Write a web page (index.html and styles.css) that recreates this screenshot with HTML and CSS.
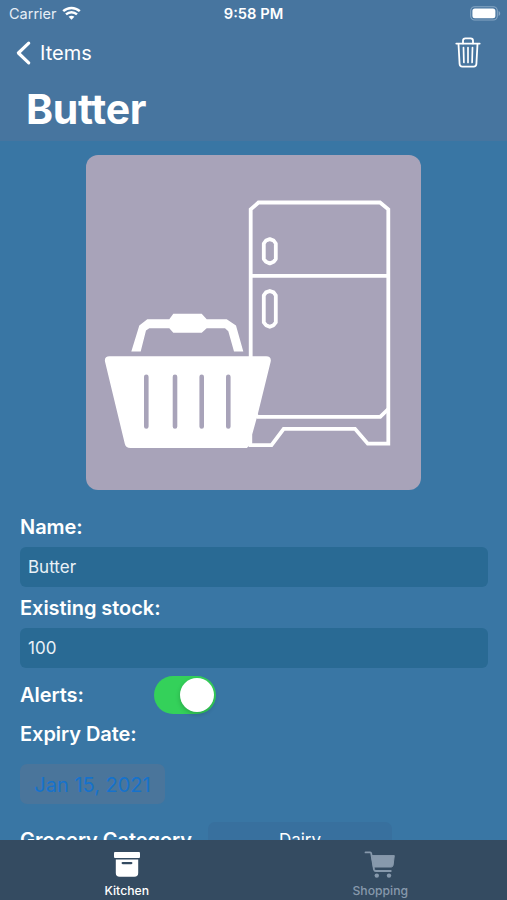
FILE: index.html
```html
<!DOCTYPE html>
<html lang="en">
<head>
    <meta charset="UTF-8">
    <meta name="viewport" content="width=device-width, initial-scale=1.0">
    <title>Butter</title>
    <link rel="stylesheet" href="styles.css">
</head>
<body>
    <div class="app">
        <header class="header">
            <div class="status-bar">
                <div class="carrier">
                    <span>Carrier</span>
                    <svg width="19" height="15" viewBox="0 0 19 15" fill="none" stroke="#fff" stroke-width="2.5">
                        <path d="M1.2 5.2C6 .8 13 .8 17.8 5.2"/>
                        <path d="M4 8.4c3.2-2.9 7.8-2.9 11 0"/>
                        <path d="M6.6 10.8c1.7-1.5 4.1-1.5 5.8 0L9.5 13.8z" fill="#fff" stroke="none"/>
                    </svg>
                </div>
                <div class="clock">9:58 PM</div>
                <div class="battery">
                    <svg width="31" height="15" viewBox="0 0 31 15">
                        <rect x=".7" y=".7" width="26.6" height="13.3" rx="4" fill="none" stroke="#86a6c4" stroke-width="1.1"/>
                        <rect x="2.4" y="2.5" width="23" height="9.8" rx="2.5" fill="#fff"/>
                        <path d="M28.6 5v5c2.1-.9 2.1-4.1 0-5z" fill="#86a6c4"/>
                    </svg>
                </div>
            </div>
            <div class="nav-bar">
                <a href="#" class="back">
                    <svg width="15" height="24" viewBox="0 0 15 24" fill="none" stroke="#fff" stroke-width="3.2" stroke-linecap="round" stroke-linejoin="round">
                        <path d="M12.7 2.2 2.4 12l10.3 9.8"/>
                    </svg>
                    <span>Items</span>
                </a>
                <a href="#" class="delete" aria-label="Delete">
                    <svg width="26" height="31" viewBox="0 0 26 31" fill="none" stroke="#fff" stroke-width="1.8" stroke-linecap="round" stroke-linejoin="round">
                        <path d="M1.3 6.6h23.4"/>
                        <path d="M8 6.4V3.800C8 2.200 8.800 1.400 10.400 1.400h5.200C17.200 1.400 18 2.200 18 3.800v2.600"/>
                        <path d="M3.500 7l1.100 20c.1 1.700 1 2.600 2.700 2.600h11.400c1.700 0 2.600-.9 2.700-2.600l1.100-20"/>
                        <path d="M8.500 10.500l.4 15M13 10.500v15M17.500 10.500l-.4 15" stroke-width="1.700"/>
                    </svg>
                </a>
            </div>
            <h1>Butter</h1>
        </header>

        <main class="content">
            <div class="photo">
                <svg width="335" height="335" viewBox="86 154.500 335 335" fill="none" stroke="#fff" stroke-width="3.800">
                    <!-- fridge -->
                    <path d="M250.700 430V208.800L258.500 202H380l8.300 6.800v234.400h-20.500L355 428.300h-71.300L271.500 444.600H249"/>
                    <path d="M250.700 275.400h137.600M250.700 409.500l7 6.800h122.500l8.100-7.800"/>
                    <path stroke-linejoin="round" d="M269.800 238.600l3.800 1.400 2.200 3v15.500l-2.200 2.800-3.800 1.600-3.800-1.600-2.200-2.800V243l2.200-3z"/>
                    <path stroke-linejoin="round" d="M269.800 290.500l3.800 1.400 2.200 3v27l-2.200 2.800-3.800 1.600-3.800-1.600-2.200-2.800v-27l2.200-3z"/>
                    <!-- basket -->
                    <g fill="#fff" stroke="none">
                        <path d="M131.300 351l8-26 8-6.300h22l4-5.400h28.400l5 5.400h20l9.300 6.300 7.300 26H234l-5.700-20.300-3.300-3h-18.300l-5 4.600h-28.400l-4-4.600h-20l-3.300 2.300-5.300 21z"/>
                        <path d="M109.500 355.800h156.700c3.600 0 5.300 2.200 4.400 5.700L257.700 414l-5.500 20v9l-5.500 4.600H130.500c-3.200 0-4.900-1.300-5.700-4.300L105.100 361.500c-.9-3.500.8-5.700 4.400-5.700z"/>
                    </g>
                    <path d="M146.300 376.300V426M175 376.300V426M201.700 376.300V426M228.300 376.300V426" stroke="#a8a3b9" stroke-width="4.600" stroke-linecap="round"/>
                </svg>
            </div>

            <form class="item-form">
                <label class="label" for="name">Name:</label>
                <input class="field" id="name" type="text" value="Butter">
                <label class="label" for="stock">Existing stock:</label>
                <input class="field" id="stock" type="text" value="100">
                <div class="alerts-row">
                    <span class="label alerts-label">Alerts:</span>
                    <span class="switch"><span class="knob"></span></span>
                </div>
                <span class="label expiry-label">Expiry Date:</span>
                <button type="button" class="date">Jan 15, 2021</button>
                <div class="category-row">
                    <span class="label category-label">Grocery Category</span>
                    <span class="category">Dairy</span>
                </div>
            </form>
        </main>

        <nav class="tab-bar">
            <a href="#" class="tab active">
                <svg width="28" height="26" viewBox="0 0 28 26" fill="currentColor">
                    <path d="M2.300.5h23.400c.8 0 1.300.5 1.300 1.300v3.400c0 .8-.5 1.300-1.300 1.300H2.300C1.500 6.500 1 6 1 5.200V1.800C1 1 1.500.5 2.300.5z"/>
                    <path fill-rule="evenodd" d="M2.800 7.900h22.400v13.600c0 2.500-1.300 3.800-3.800 3.800H6.600c-2.500 0-3.800-1.300-3.800-3.800zM9.700 10.400a1.100 1.100 0 0 0 0 2.300h8.600a1.100 1.100 0 0 0 0-2.300z"/>
                </svg>
                <span>Kitchen</span>
            </a>
            <a href="#" class="tab">
                <svg width="32" height="27" viewBox="0 0 32 27" fill="none" stroke="currentColor" stroke-width="1.800" stroke-linecap="round" stroke-linejoin="round">
                    <path d="M1.500 1.400h4.700c.6 0 .9.300 1 .9L10 18.500c.2 1 .8 1.500 1.800 1.500h15"/>
                    <path d="M8 4.600h22.300l-1.200 9.500c-.2 1.300-.8 1.900-2 1.900H9.800z" fill="currentColor" stroke-width="1"/>
                    <circle cx="12.800" cy="24.600" r="2.200" fill="currentColor" stroke="none"/>
                    <circle cx="25" cy="24.600" r="2.200" fill="currentColor" stroke="none"/>
                </svg>
                <span>Shopping</span>
            </a>
        </nav>
    </div>
</body>
</html>
```
FILE: styles.css
```css
* { box-sizing: border-box; }
body { margin: 0; font-family: Inter, "Liberation Sans", sans-serif; color: #fff; background: #3976a4; }
a { color: inherit; text-decoration: none; }
svg { display: block; overflow: visible; }
.app { display: flex; flex-direction: column; height: 900px; overflow: hidden; }

.header { flex: none; height: 141px; background: #47759f; }
.status-bar { display: grid; grid-template-columns: 1fr auto 1fr; align-items: center; height: 27px; padding: 0 6px 0 9px; }
.carrier { display: flex; align-items: center; gap: 5px; font-size: 14.5px; color: #e6eef6; }
.clock { margin-left: -3px; font-size: 14.7px; font-weight: 600; }
.battery { justify-self: end; }
.nav-bar { display: flex; align-items: center; justify-content: space-between; height: 50px; padding: 0 26px 0 16px; }
.back { display: flex; align-items: center; gap: 9px; padding-top: 1px; font-size: 20px; }
.header h1 { margin: 5px 0 0 26px; font-size: 41px; line-height: 54px; font-weight: 700; letter-spacing: -0.3px; }

.content { flex: 1; min-height: 0; overflow: hidden; }
.photo { width: 335px; height: 335px; margin: 13.5px auto 0; border-radius: 12px; background: #a8a3b9; overflow: hidden; }

.item-form { display: flex; flex-direction: column; align-items: flex-start; padding: 22px 19px 0 20px; }
.label { font-size: 20px; line-height: 30px; font-weight: 600; letter-spacing: -0.05px; white-space: nowrap; }
.field { width: 100%; height: 40px; margin: 5.5px 0; padding: 0 8px; border: 0; border-radius: 6px; background: #296a94; color: #e9f1f7; font: 17px Inter, "Liberation Sans", sans-serif; }
.alerts-row { display: flex; align-items: center; height: 40px; margin-top: 1px; }
.alerts-label { width: 134px; }
.switch { display: flex; align-items: center; justify-content: flex-end; width: 62px; height: 38px; padding: 2px; border-radius: 19px; background: #34d15a; }
.knob { width: 34px; height: 34px; border-radius: 50%; background: #fff; box-shadow: 0 2px 5px rgba(0,0,0,0.2); }
.expiry-label { margin-top: 4px; }
.date { width: 145px; height: 40px; margin-top: 15px; padding: 2px 0 0; border: 0; border-radius: 7px; background: #4a759b; color: #1672cb; font: 20px Inter, "Liberation Sans", sans-serif; }
.category-row { display: flex; align-items: center; margin-top: 18px; }
.category-label { width: 188px; }
.category { width: 184px; height: 36px; border-radius: 7px; background: #38709e; font-size: 17px; line-height: 37px; text-align: center; }

.tab-bar { flex: none; display: grid; grid-template-columns: 1fr 1fr; height: 60px; background: #344b61; }
.tab { display: flex; flex-direction: column; align-items: center; padding-top: 11px; font-size: 12.2px; font-weight: 500; color: #8799ac; }
.tab svg { height: 27px; }
.tab span { margin-top: 5px; line-height: 16px; }
.tab.active { color: #fff; }
```
